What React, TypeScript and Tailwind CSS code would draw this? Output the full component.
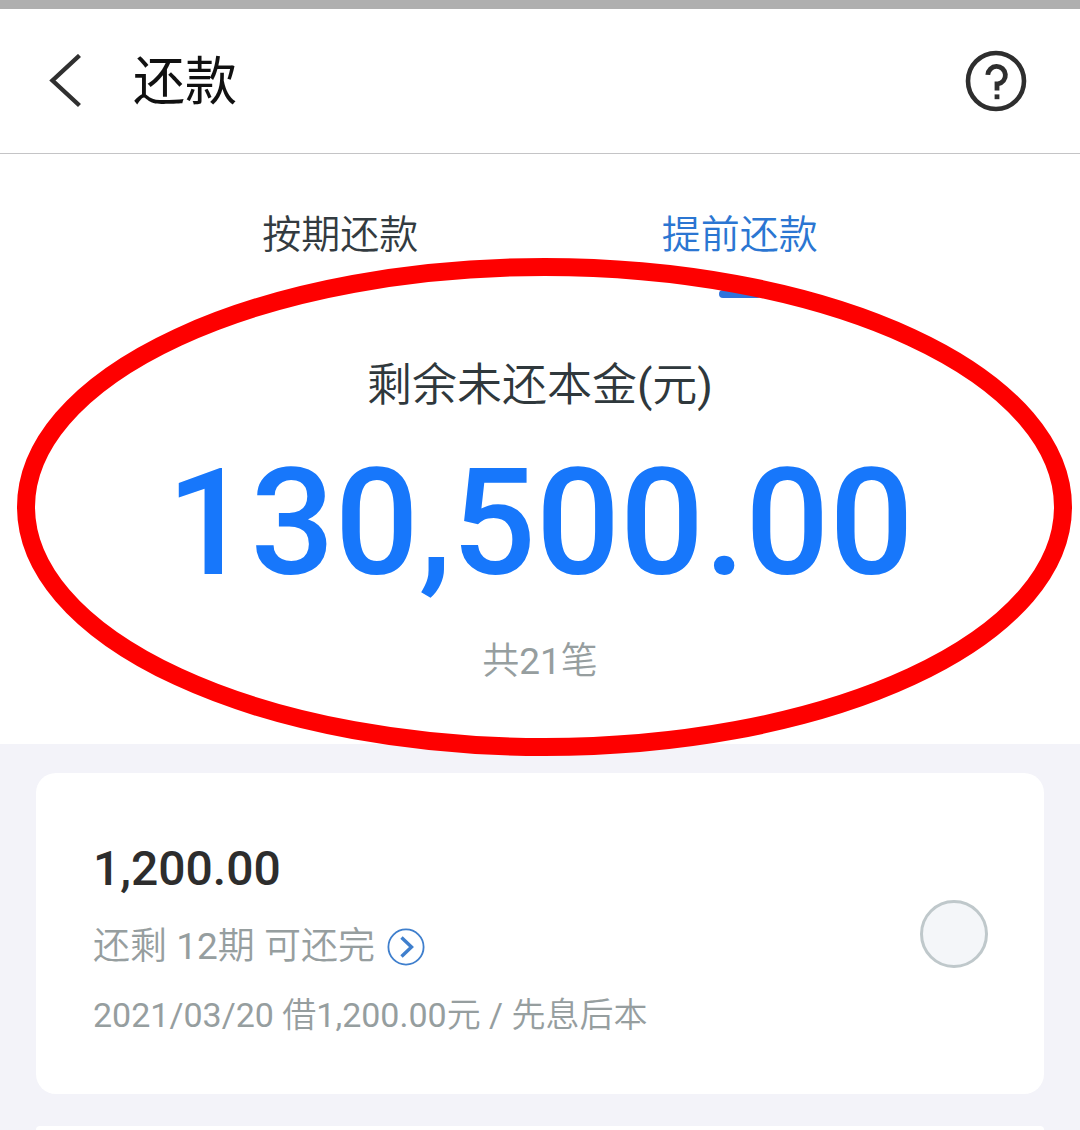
import { useState } from "react"

type Tab = {
  id: string
  name: string
}

type Loan = {
  id: string
  amount: string
  remaining: string
  detail: string
}

const tabs: Tab[] = [
  { id: "scheduled", name: "按期还款" },
  { id: "early", name: "提前还款" },
]

const loans: Loan[] = [
  {
    id: "loan-1",
    amount: "1,200.00",
    remaining: "还剩 12期 可还完",
    detail: "2021/03/20 借1,200.00元 / 先息后本",
  },
]

function Header() {
  return (
    <header className="flex h-[145px] items-center border-b border-[#c4c4c6] bg-white pr-[53px] pl-[48px] font-['Roboto','Noto_Sans_CJK_SC',sans-serif]">
      <button type="button" aria-label="返回">
        <svg
          className="h-[54px] w-[34px]"
          viewBox="0 0 34 54"
          fill="none"
          stroke="#303030"
          strokeWidth="4.4"
        >
          <path d="M31.5 1.5 4.5 26.5l27 25" />
        </svg>
      </button>
      <h1 className="ml-[51px] pt-1 text-[52px] leading-[64px] text-[#111]">
        还款
      </h1>
      <button type="button" aria-label="帮助" className="ml-auto">
        <svg
          className="size-[62px]"
          viewBox="0 0 62 62"
          fill="none"
          stroke="#2e2e2e"
        >
          <circle cx="31" cy="31" r="28" strokeWidth="4.6" />
          <path
            d="M22.8 24.8a8.8 8.8 0 1 1 10.2 9.1h-1v6.6"
            strokeWidth="4.8"
          />
          <path d="M29.6 46.8h4.8" strokeWidth="4.8" />
        </svg>
      </button>
    </header>
  )
}

function Summary() {
  const [active, setActive] = useState("early")

  return (
    <section className="relative bg-white pb-[58px]">
      <nav className="grid grid-cols-2 px-[13%]">
        {tabs.map(({ id, name }) => (
          <button
            key={id}
            type="button"
            onClick={() => setActive(id)}
            className={
              active === id
                ? "flex flex-col items-center pt-[52px] text-[#2b76d2]"
                : "flex flex-col items-center pt-[52px] text-[#333b40]"
            }
          >
            <span className="text-[39px] leading-[58px]">{name}</span>
            <span
              className={
                active === id
                  ? "mt-[26px] h-2 w-[42px] rounded-sm bg-[#2f74dc]"
                  : "mt-[26px] h-2 w-[42px]"
              }
            />
          </button>
        ))}
      </nav>

      <div className="text-center">
        <h2 className="mt-[56px] text-[45px] leading-[64px] text-[#2f383c]">
          剩余未还本金(元)
        </h2>
        <p className="mt-[26px] text-[148px] leading-[160px] font-medium text-[#1777fb]">
          130,500.00
        </p>
        <p className="mt-[34px] text-[37px] leading-[48px] text-[#969e9f]">
          共21笔
        </p>
      </div>

      {/* red ring round the total */}
      <svg
        className="pointer-events-none absolute top-[113px] right-[17px] left-[26px] h-[480px] w-[calc(100%-43px)] overflow-visible"
        fill="none"
      >
        <ellipse
          cx="50%"
          cy="50%"
          rx="50%"
          ry="50%"
          stroke="#fe0000"
          strokeWidth="18"
        />
      </svg>
    </section>
  )
}

function LoanCard({ loan }: { loan: Loan }) {
  return (
    <article className="flex items-center rounded-[20px] bg-white pt-[68px] pr-[56px] pb-[54px] pl-[57px]">
      <div className="flex-1">
        <label
          htmlFor={loan.id}
          className="block text-[48px] leading-[56px] font-medium text-[#2d2d2d]"
        >
          {loan.amount}
        </label>
        <a
          href="#"
          className="mt-[24px] flex items-center text-[37px] leading-[52px] text-[#969e9f]"
        >
          {loan.remaining}
          <svg
            className="ml-[12px] size-[38px]"
            viewBox="0 0 38 38"
            fill="none"
            stroke="#3f7fcd"
          >
            <circle cx="19" cy="19" r="17.6" strokeWidth="1.8" />
            <path d="m14.5 9.5 10 9.5-10 9.5" strokeWidth="3.4" />
          </svg>
        </a>
        <p className="mt-[17px] text-[34px] leading-[50px] text-[#969e9f]">
          {loan.detail}
        </p>
      </div>
      <input
        id={loan.id}
        type="radio"
        name="loan"
        className="mb-[14px] size-[68px] appearance-none rounded-full border-[3px] border-[#bfc8cb] bg-[#f4f6f9] checked:border-[#1777fb] checked:bg-[#1777fb]"
      />
    </article>
  )
}

export default function App() {
  return (
    <div className="flex min-h-screen flex-col bg-[#f3f3f9] font-['Roboto','Noto_Sans_CJK_SC_DemiLight','Noto_Sans_CJK_SC',sans-serif]">
      <div className="h-[9px] bg-[#afafaf]" />
      <Header />
      <Summary />
      <main className="flex flex-1 flex-col gap-[32px] px-[36px] pt-[29px]">
        {loans.map((loan) => (
          <LoanCard key={loan.id} loan={loan} />
        ))}
        {/* top edge of the next card */}
        <div className="flex-1 rounded-t-[20px] bg-white" />
      </main>
    </div>
  )
}
